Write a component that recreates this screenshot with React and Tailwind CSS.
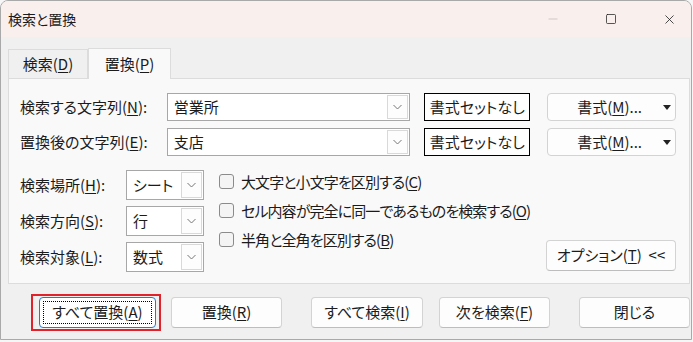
import { Square, X, Minus } from 'lucide-react';

const font = { fontFamily: '"Noto Sans CJK JP", "Noto Sans", sans-serif' };

function U({ children }) {
  return <span className="underline underline-offset-[2px] decoration-1">{children}</span>;
}

function Chevron() {
  return (
    <svg width="9" height="6" viewBox="0 0 9 6" className="text-[#777]">
      <polyline points="0.5,1 4.5,5 8.5,1" fill="none" stroke="currentColor" strokeWidth="1" />
    </svg>
  );
}

function Combo({ value, className }) {
  return (
    <div className={`flex items-stretch bg-white border border-[#a7a7a7] ${className}`}>
      <div className="flex-1 flex items-center pl-[6px] text-[15px]">{value}</div>
      <div className="w-[21px] m-[1px] border border-[#d9d9d9] bg-[#fdfdfd] flex items-center justify-center">
        <Chevron />
      </div>
    </div>
  );
}

function Btn({ children, className = '' }) {
  return (
    <div
      className={`h-[31px] shrink-0 flex items-center justify-center whitespace-nowrap bg-[#fdfdfd] border border-[#d3d3d3] border-b-[#bdbdbd] rounded-[4px] text-[15px] ${className}`}
    >
      {children}
    </div>
  );
}

function Check({ children }) {
  return (
    <div className="flex items-center h-[15px] gap-[7px]">
      <div className="w-[15px] h-[15px] rounded-[3px] border border-[#8b8b8b] bg-[#f4f4f4]" />
      <span className="text-[15px] leading-none whitespace-nowrap tracking-[-0.9px]">{children}</span>
    </div>
  );
}

export default function App() {
  return (
    <div
      style={font}
      className="w-[693px] h-[342px] bg-[#f6f6f6] text-[#1b1b1b] overflow-hidden [font-feature-settings:'palt']"
    >
      <div className="w-[692px] h-[340px] bg-[#f0f0f0] border border-[#a9a9a9] rounded-t-[8px] overflow-hidden flex flex-col">
        {/* title bar */}
        <div className="h-[36px] bg-[#f9efed] flex items-center justify-between pl-[7px]">
          <span className="text-[14px]">検索と置換</span>
          <div className="flex items-center gap-[45px] pr-[14px] text-[#222]">
            <Minus size={14} strokeWidth={1} className="text-[#b5b0ae]" />
            <Square size={12} strokeWidth={1.5} />
            <X size={15} strokeWidth={1.3} />
          </div>
        </div>

        {/* tabs */}
        <div className="mt-[11px] ml-[7px] flex items-end">
          <div className="w-[80px] h-[29px] border border-b-0 border-[#dcdcdc] bg-[#f0f0f0] flex items-center justify-center text-[15px]">
            検索(<U>D</U>)
          </div>
          <div className="w-[83px] h-[31px] -mb-px relative z-10 border border-b-0 border-[#dcdcdc] bg-[#f9f9f9] flex items-center justify-center text-[15px]">
            置換(<U>P</U>)
          </div>
        </div>

        {/* panel */}
        <div className="ml-[7px] w-[682px] h-[206px] bg-[#f9f9f9] border border-[#dcdcdc] pt-[14px] pl-[11px] pr-[13px] flex flex-col">
          <div className="flex flex-col gap-[7px]">
            {[
              ['検索する文字列(', 'N', '):', '営業所'],
              ['置換後の文字列(', 'E', '):', '支店'],
            ].map(([a, k, b, v]) => (
              <div key={k} className="flex items-center h-[28px]">
                <div className="w-[147px] text-[15px] whitespace-nowrap">
                  {a}
                  <U>{k}</U>
                  {b}
                </div>
                <Combo value={v} className="w-[244px] h-[28px]" />
                <div className="ml-[14px] w-[106px] h-[28px] border-[1.5px] border-black bg-white flex items-center justify-center text-[15px] whitespace-nowrap">
                  書式セットなし
                </div>
                <div className="ml-[17px] w-[129px] h-[28px] bg-[#fdfdfd] border border-[#d3d3d3] rounded-[4px] flex items-center relative text-[15px]">
                  <span className="flex-1 text-center pr-[4px] whitespace-nowrap">
                    書式(<U>M</U>)...
                  </span>
                  <svg width="8" height="5" viewBox="0 0 8 5" className="absolute right-[4px] top-[11px]">
                    <polygon points="0,0 8,0 4,5" fill="#222" />
                  </svg>
                </div>
              </div>
            ))}
          </div>

          <div className="mt-[14px] flex">
            <div className="flex flex-col gap-[6px] shrink-0">
              {[
                ['検索場所(', 'H', '):', 'シート'],
                ['検索方向(', 'S', '):', '行'],
                ['検索対象(', 'L', '):', '数式'],
              ].map(([a, k, b, v]) => (
                <div key={k} className="flex items-center h-[30px]">
                  <div className="w-[106px] text-[15px] whitespace-nowrap">
                    {a}
                    <U>{k}</U>
                    {b}
                  </div>
                  <Combo value={v} className="w-[78px] h-[30px]" />
                </div>
              ))}
            </div>
            <div className="ml-[15px] pt-[4px] flex flex-col gap-[14px] shrink-0">
              <Check>
                大文字と小文字を区別する(<U>C</U>)
              </Check>
              <Check>
                セル内容が完全に同一であるものを検索する(<U>O</U>)
              </Check>
              <Check>
                半角と全角を区別する(<U>B</U>)
              </Check>
            </div>
            <div className="flex-1 flex justify-end items-end pb-[1px]">
              <Btn className="w-[130px]">
                オプション(<U>T</U>)&nbsp;&nbsp;&lt;&lt;
              </Btn>
            </div>
          </div>
        </div>

        {/* bottom buttons */}
        <div className="mt-[10px] ml-[30px] flex items-center">
          <div className="border-2 border-[#e3212b] pl-[6px] pr-[3px] py-[1px]">
            <div className="w-[117px] h-[31px] p-[3px] bg-white border border-[#2a78c8] rounded-[4px]">
              <div className="w-full h-full border border-dotted border-black flex items-center justify-center text-[15px] whitespace-nowrap">
                すべて置換(<U>A</U>)
              </div>
            </div>
          </div>
          <Btn className="ml-[10px] w-[111px]">
            置換(<U>R</U>)
          </Btn>
          <Btn className="ml-[29px] w-[112px]">
            すべて検索(<U>I</U>)
          </Btn>
          <Btn className="ml-[16px] w-[111px]">
            次を検索(<U>F</U>)
          </Btn>
          <Btn className="ml-[29px] w-[111px]">閉じる</Btn>
        </div>
      </div>
    </div>
  );
}
